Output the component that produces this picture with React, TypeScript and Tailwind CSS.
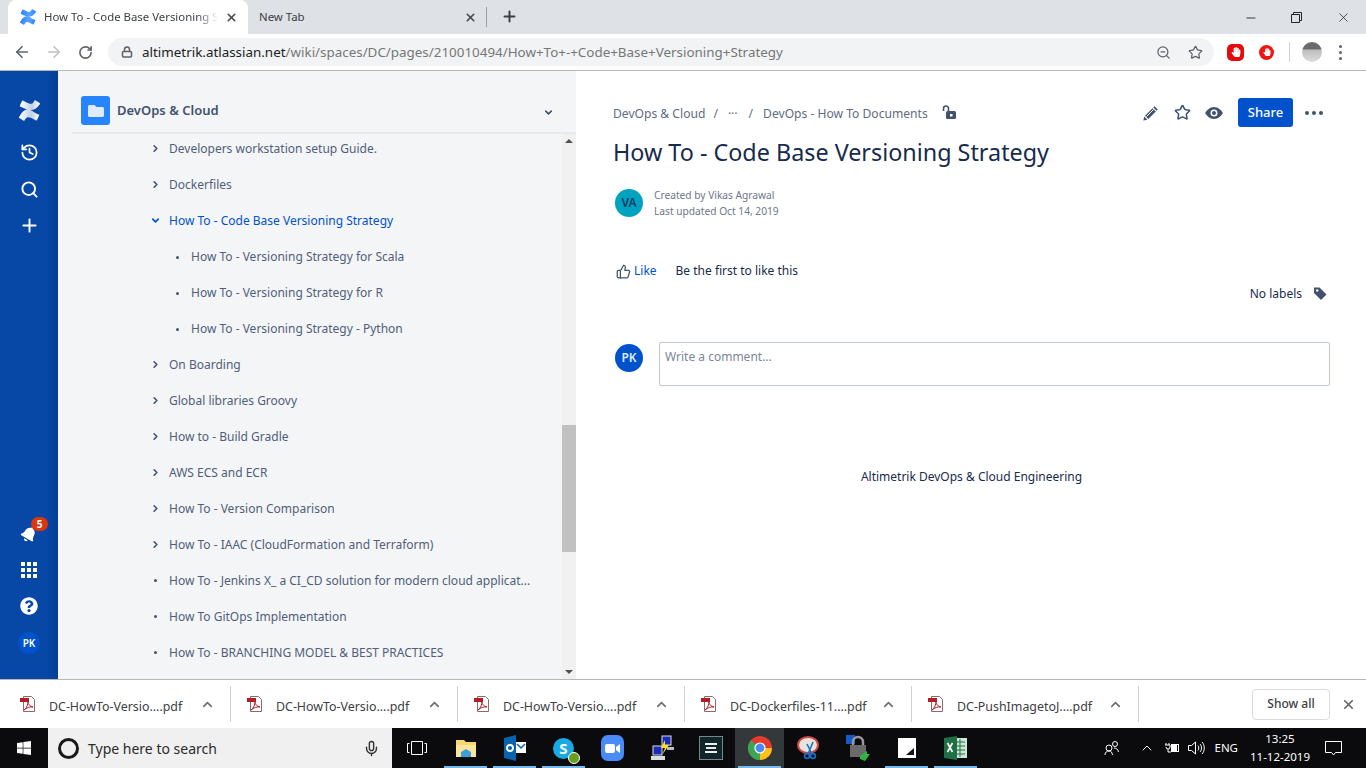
import {
  ArrowLeft,
  ArrowRight,
  ChevronDown,
  ChevronRight,
  ChevronUp,
  History,
  Lock,
  Mic,
  Minus,
  Plus,
  RotateCw,
  Search,
  Star,
  ThumbsUp,
  X,
  ZoomOut,
} from "lucide-react";
import { FaBell, FaQuestionCircle, FaWindows, FaHandPaper, FaFolder } from "react-icons/fa";

const tree = [
  { label: "Developers workstation setup Guide.", kind: "closed" },
  { label: "Dockerfiles", kind: "closed" },
  { label: "How To - Code Base Versioning Strategy", kind: "open" },
  { label: "How To - Versioning Strategy for Scala", kind: "child" },
  { label: "How To - Versioning Strategy for R", kind: "child" },
  { label: "How To - Versioning Strategy - Python", kind: "child" },
  { label: "On Boarding", kind: "closed" },
  { label: "Global libraries Groovy", kind: "closed" },
  { label: "How to - Build Gradle", kind: "closed" },
  { label: "AWS ECS and ECR", kind: "closed" },
  { label: "How To - Version Comparison", kind: "closed" },
  { label: "How To - IAAC (CloudFormation and Terraform)", kind: "closed" },
  { label: "How To - Jenkins X_ a CI_CD solution for modern cloud applicat...", kind: "leaf" },
  { label: "How To GitOps Implementation", kind: "leaf" },
  { label: "How To - BRANCHING MODEL & BEST PRACTICES", kind: "leaf" },
];

const downloads = [
  "DC-HowTo-Versio....pdf",
  "DC-HowTo-Versio....pdf",
  "DC-HowTo-Versio....pdf",
  "DC-Dockerfiles-11....pdf",
  "DC-PushImagetoJ....pdf",
];

function ConfluenceLogo({ size, color, id }: { size: number; color: string; id: string }) {
  return (
    <svg width={size} height={size} viewBox="0 0 24 24" className="shrink-0">
      <defs>
        <linearGradient id={id} x1="0" y1="0" x2="1" y2="0">
          <stop offset="0" stopColor={color} />
          <stop offset="0.6" stopColor={color} stopOpacity="0.75" />
          <stop offset="1" stopColor={color} />
        </linearGradient>
      </defs>
      <path
        fill={`url(#${id})`}
        d="M.87 18.26c-.25.38-.53.87-.76 1.24a.76.76 0 0 0 .25 1.04l4.97 3.05a.76.76 0 0 0 1.06-.26c.2-.33.45-.76.73-1.22 1.97-3.25 3.95-2.85 7.51-1.15l4.96 2.34a.76.76 0 0 0 1.03-.38l2.36-5.33a.76.76 0 0 0-.38-1c-1.1-.52-3.28-1.55-4.97-2.36C11.6 9.3 5.5 9.5.87 18.26z"
      />
      <path
        fill={`url(#${id})`}
        d="M23.13 5.74c.25-.4.53-.87.76-1.25a.76.76 0 0 0-.25-1.03L18.67.4a.76.76 0 0 0-1.06.26c-.2.34-.45.77-.73 1.23-1.97 3.25-3.95 2.85-7.51 1.15L4.44.7a.76.76 0 0 0-1.03.38L1.05 6.4a.76.76 0 0 0 .38 1c1.1.52 3.28 1.55 4.97 2.36 6.07 2.9 12.1 2.7 16.73-4.02z"
      />
    </svg>
  );
}

function PdfIcon() {
  return (
    <svg width="17" height="17" viewBox="0 0 17 17" className="shrink-0">
      <path d="M3.5 .5h8l3 3v12h-11z" fill="#fff" stroke="#8a6a6a" />
      <rect x="0" y="2" width="9" height="4" fill="#b51c24" />
      <path d="M4 14c3-2 4-6 4-9 0 4 2 5 5 6-3-.5-6 .5-9 3z" fill="none" stroke="#b51c24" />
    </svg>
  );
}

function TreeRow({ label, kind }: { label: string; kind: string }) {
  const isOpen = kind === "open";
  return (
    <div className="flex h-9 shrink-0 items-center text-[12px] text-[#505f79]">
      {kind === "child" ? (
        <>
          <span className="ml-[118px] h-[3px] w-[3px] rounded-full bg-[#42526e]" />
          <span className="ml-[12px] whitespace-nowrap">{label}</span>
        </>
      ) : (
        <>
          <span className="ml-[90px] flex w-[14px] shrink-0 -translate-y-px justify-center">
            {kind === "leaf" ? (
              <span className="h-[3px] w-[3px] rounded-full bg-[#42526e]" />
            ) : isOpen ? (
              <ChevronDown size={11} strokeWidth={3.5} className="text-[#0052cc]" />
            ) : (
              <ChevronRight size={11} strokeWidth={3.5} className="text-[#42526e]" />
            )}
          </span>
          <span className={`ml-[7px] whitespace-nowrap ${isOpen ? "text-[#0052cc]" : ""}`}>{label}</span>
        </>
      )}
    </div>
  );
}

function TaskIcon({ children, open, active }: { children: React.ReactNode; open?: boolean; active?: boolean }) {
  return (
    <div className={`relative flex h-10 w-[49px] items-center justify-center ${active ? "bg-[#33383b]" : ""}`}>
      {children}
      {open && <span className="absolute bottom-0 left-[3px] right-[3px] h-[2px] bg-[#76b9ed]" />}
    </div>
  );
}

export default function App() {
  return (
    <div className="flex h-[768px] w-[1366px] flex-col overflow-hidden bg-white font-['Noto_Sans',sans-serif]">
      {/* tabs */}
      <div className="flex h-[34px] shrink-0 items-end bg-[#dee1e6] pl-2 text-[11.4px] text-[#3c4043]">
        <div className="flex h-[34px] w-[240px] items-center rounded-t-lg bg-white pl-[12px] pr-2">
          <ConfluenceLogo size={16} color="#2684ff" id="favicon" />
          <span className="ml-2 w-[174px] overflow-hidden whitespace-nowrap [mask-image:linear-gradient(90deg,#000_88%,transparent)]">
            How To - Code Base Versioning Strategy
          </span>
          <X size={13} strokeWidth={3} className="ml-[7px] text-[#45494d]" />
        </div>
        <div className="flex h-[34px] w-[238px] items-center pl-[11px] pr-[9px]">
          <span className="flex-1">New Tab</span>
          <X size={13} strokeWidth={3} className="text-[#45494d]" />
        </div>
        <div className="mb-[7px] h-5 w-px bg-[#9aa0a6]" />
        <Plus size={17} strokeWidth={2.8} className="mb-[9px] ml-[14px] text-[#3c4043]" />
        <div className="mb-[9px] ml-auto flex items-center text-[#222]">
          <Minus size={14} strokeWidth={1.5} className="mr-[33px]" />
          <svg width="11" height="11" viewBox="0 0 11 11" className="mr-[34px]" fill="none" stroke="#222">
            <path d="M.5 2.500h8v8h-8zM2.500 2.500v-2h8v8h-2" />
          </svg>
          <X size={15} strokeWidth={1.2} className="mr-[15px]" />
        </div>
      </div>

      {/* toolbar */}
      <div className="flex h-[37px] shrink-0 items-center border-b border-[#b7b7b7] bg-white">
        <ArrowLeft size={18} strokeWidth={2.2} className="ml-[13px] text-[#5f6368]" />
        <ArrowRight size={18} strokeWidth={2.2} className="ml-[14px] text-[#bfc1c4]" />
        <RotateCw size={15} strokeWidth={2.6} className="ml-[15px] text-[#5f6368]" />
        <div className="ml-[15px] flex h-7 w-[1106px] items-center rounded-full bg-[#f1f3f4] pl-[13px] pr-[11px]">
          <Lock size={12} strokeWidth={3} className="text-[#5f6368]" />
          <span className="ml-[9px] flex-1 text-[13.4px] whitespace-nowrap text-[#777]">
            <span className="text-[#202124]">altimetrik.atlassian.net</span>/wiki/spaces/DC/pages/210010494/How+To+-+Code+Base+Versioning+Strategy
          </span>
          <ZoomOut size={15} className="text-[#5f6368]" />
          <Star size={15} strokeWidth={2} className="ml-[17px] text-[#5f6368]" />
        </div>
        <span className="ml-[13px] flex h-[17px] w-[17px] items-center justify-center rounded-[5px] bg-[#e30b0b]">
          <FaHandPaper size={10} className="text-white" />
        </span>
        <span className="ml-[15px] flex h-[15px] w-[15px] items-center justify-center rounded-full bg-[#f01515]">
          <FaHandPaper size={8} className="text-white" />
        </span>
        <span className="ml-[15px] h-5 w-px bg-[#cfcfcf]" />
        <span className="ml-[12px] h-5 w-5 rounded-full bg-[linear-gradient(#6a6a6a_0,#6a6a6a_35%,#bdbdbd_40%,#dcdcdc_100%)]" />
        <span className="ml-[17px] flex flex-col gap-[3px]">
          <span className="h-[3px] w-[3px] rounded-full bg-[#5f6368]" />
          <span className="h-[3px] w-[3px] rounded-full bg-[#5f6368]" />
          <span className="h-[3px] w-[3px] rounded-full bg-[#5f6368]" />
        </span>
      </div>

      {/* page */}
      <div className="flex min-h-0 flex-1">
        <div className="flex w-[58px] shrink-0 flex-col items-center bg-[linear-gradient(90deg,#0747a6_80%,#063f94)] text-white">
          <div className="mt-[29px]">
            <ConfluenceLogo size={21} color="#ffffff" id="navlogo" />
          </div>
          <History size={19} strokeWidth={2.2} className="mt-[22px]" />
          <Search size={19} strokeWidth={2.4} className="mt-[18px]" />
          <Plus size={21} strokeWidth={2.2} className="mt-[16px]" />
          <div className="relative mt-auto">
            <FaBell size={16} className="rotate-[30deg]" />
            <span className="absolute -right-[11px] -top-[9px] flex h-[14px] w-[17px] items-center justify-center rounded-full bg-[#de350b] text-[10px] font-bold">5</span>
          </div>
          <div className="mt-[20px] grid grid-cols-3 gap-[2px]">
            {Array.from({ length: 9 }).map((_, i) => (
              <span key={i} className="h-[4px] w-[4px] bg-white" />
            ))}
          </div>
          <FaQuestionCircle size={18} className="mt-[19px]" />
          <span className="mb-[25px] mt-[17px] flex h-[22px] w-[22px] items-center justify-center rounded-full bg-[#0052cc] text-[10px] font-semibold">PK</span>
        </div>

        <div className="flex w-[518px] shrink-0 flex-col bg-[#f4f5f7]">
          <div className="ml-[14px] flex h-[63px] shrink-0 items-end border-b-2 border-[#e8e9ed] pb-[7px]">
            <span className="ml-[9px] flex h-[29px] w-[29px] items-center justify-center rounded-[3px] bg-[#2684ff]">
              <FaFolder size={16} className="text-[#deebff]" />
            </span>
            <span className="mb-[5px] ml-[7px] text-[13px] font-semibold text-[#42526e]">DevOps &amp; Cloud</span>
            <ChevronDown size={11} strokeWidth={3.5} className="mb-[7px] ml-[324px] text-[#42526e]" />
          </div>
          <div className="flex min-h-0 flex-1">
            <div className="min-w-0 flex-1 overflow-hidden">
              <div className="-mt-[3px] flex flex-col">
                {tree.map((t) => (
                  <TreeRow key={t.label} label={t.label} kind={t.kind} />
                ))}
              </div>
            </div>
            <div className="flex w-[14px] shrink-0 flex-col bg-[#f1f1f1]">
              <span className="mx-auto mt-[5px] h-0 w-0 border-x-[4px] border-b-[4px] border-x-transparent border-b-[#505050]" />
              <span className="mt-[282px] h-[127px] w-full bg-[#c1c1c1]" />
              <span className="mx-auto mb-[5px] mt-auto h-0 w-0 border-x-[4px] border-t-[4px] border-x-transparent border-t-[#505050]" />
            </div>
          </div>
        </div>

        <div className="min-w-0 flex-1 pl-[37px] pr-[36px]">
          <div className="mt-[27px] flex h-[29px] items-center text-[12.1px] text-[#5e6c84]">
            <span className="mt-[4px]">DevOps &amp; Cloud</span>
            <span className="ml-2 mt-[4px]">/</span>
            <span className="ml-[10px] mt-[4px]">···</span>
            <span className="ml-[11px] mt-[4px]">/</span>
            <span className="ml-[10px] mt-[4px]">DevOps - How To Documents</span>
            <svg width="14" height="15" viewBox="0 0 14 15" className="-mt-[1px] ml-[14px]">
              <path d="M1.500 6V3.500a2.500 2.500 0 0 1 5 0V6" fill="none" stroke="#42526e" strokeWidth="1.600" />
              <rect x="4" y="6" width="10" height="8" rx="1.500" fill="#42526e" />
              <rect x="8" y="9" width="2.500" height="2.500" fill="#fff" />
            </svg>
            <div className="ml-auto flex items-center text-[#42526e]">
              <svg width="16" height="16" viewBox="0 0 16 16" fill="#42526e">
                <path d="M11.500 1.200l3.300 3.300-1.200 1.200-3.300-3.300zM9.500 3.200l3.300 3.300-7.500 7.500-3.300-3.300zM1.200 11.600l3.200 3.200-4 .800z" />
                <path d="M10.500 4.500L3.500 11.500" stroke="#fff" strokeWidth="1" />
              </svg>
              <Star size={17} strokeWidth={2.2} className="ml-[15px]" />
              <svg width="18" height="12" viewBox="0 0 18 12" className="ml-[14px]">
                <path d="M9 0c4 0 7 3 9 6-2 3-5 6-9 6S2 9 0 6c2-3 5-6 9-6z" fill="#42526e" />
                <circle cx="9" cy="6" r="3.500" fill="#fff" />
                <circle cx="9" cy="6" r="2" fill="#42526e" />
              </svg>
              <span className="ml-[15px] flex h-[29px] w-[55px] items-center justify-center rounded-[3px] bg-[#0052cc] text-[13px] font-medium text-white">Share</span>
              <span className="ml-[12px] mr-[7px] flex gap-[3px]">
                <span className="h-[4px] w-[4px] rounded-full bg-[#42526e]" />
                <span className="h-[4px] w-[4px] rounded-full bg-[#42526e]" />
                <span className="h-[4px] w-[4px] rounded-full bg-[#42526e]" />
              </span>
            </div>
          </div>
          <h1 className="mt-[9px] text-[23.35px] leading-8 text-[#172b4d]">How To - Code Base Versioning Strategy</h1>
          <div className="mt-[19px] flex items-center">
            <span className="ml-[2px] flex h-[28px] w-[28px] items-center justify-center rounded-full bg-[#00a3bf] text-[12px] font-semibold text-[#0d3d66]">VA</span>
            <div className="ml-[11px] text-[10.2px] leading-4 text-[#6b778c]">
              <div>Created by Vikas Agrawal</div>
              <div>Last updated Oct 14, 2019</div>
            </div>
          </div>
          <div className="mt-[42px] flex h-5 items-center text-[12px]">
            <ThumbsUp size={15} className="ml-[3px] text-[#42526e]" />
            <span className="ml-[3px] text-[#0052cc]">Like</span>
            <span className="ml-[19px] text-[#172b4d]">Be the first to like this</span>
          </div>
          <div className="mt-[3px] flex h-5 items-center justify-end text-[12px] text-[#172b4d]">
            <span>No labels</span>
            <svg width="14" height="14" viewBox="0 0 14 14" className="-mt-[3px] ml-[11px] mr-[3px]">
              <path d="M1 1.500h5.500L13.500 8.500 8 14 1 7z" fill="#42526e" />
              <circle cx="4.200" cy="4.500" r="1.200" fill="#fff" />
            </svg>
          </div>
          <div className="mt-[38px] flex items-start">
            <span className="ml-[2px] mt-[2px] flex h-[28px] w-[28px] items-center justify-center rounded-full bg-[#0052cc] text-[12px] font-semibold text-[#deebff]">PK</span>
            <div className="ml-4 h-[44px] flex-1 rounded-[2px] border border-[#c1c7d0] px-[5px] py-[5px] text-[12px] text-[#7a869a]">Write a comment...</div>
          </div>
          <div className="mt-[82px] text-center text-[12px] text-[#172b4d]">Altimetrik DevOps &amp; Cloud Engineering</div>
        </div>
      </div>

      {/* downloads */}
      <div className="flex h-[49px] shrink-0 items-center border-t border-[#b7b7b7] bg-white">
        {downloads.map((d, i) => (
          <div key={i} className="flex h-9 w-[227px] shrink-0 items-center border-r border-[#d0d0d0] pl-[16px] first:w-[231px] first:pl-[20px]">
            <PdfIcon />
            <span className="ml-[12px] mt-[6px] w-[151px] text-[12.4px] whitespace-nowrap text-[#3c4043]">{d}</span>
            <ChevronUp size={15} strokeWidth={2.6} className="text-[#6e6e6e]" />
          </div>
        ))}
        <span className="ml-auto flex h-[31px] w-[78px] items-center justify-center rounded-[4px] border border-[#dadce0] text-[12px] font-medium text-[#3c4043]">Show all</span>
        <X size={15} strokeWidth={2.6} className="ml-[11px] mr-[10px] text-[#5f6368]" />
      </div>

      {/* taskbar */}
      <div className="flex h-10 shrink-0 items-center bg-[#0b0b0d] text-white">
        <div className="flex w-[48px] justify-center">
          <FaWindows size={16} />
        </div>
        <div className="flex h-10 w-[344px] items-center bg-[#f0f0f0] text-[#2b2b2b]">
          <span className="ml-[10px] h-[21px] w-[21px] rounded-full border-[3px] border-[#1a1a1a]" />
          <span className="ml-[9px] flex-1 text-[14px]">Type here to search</span>
          <Mic size={17} className="mr-[12px] text-[#333]" />
        </div>
        <TaskIcon>
          <svg width="20" height="14" viewBox="0 0 20 14" fill="none" stroke="#fff">
            <path d="M4.500.5h11v13h-11zM2.500 2.500h-2v9h2M17.500 2.500h2v9h-2" />
          </svg>
        </TaskIcon>
        <TaskIcon open>
          <svg width="22" height="20" viewBox="0 0 22 20">
            <path d="M1 2h8l2 2h10v15H1z" fill="#f7d774" />
            <rect x="1" y="7" width="20" height="12" fill="#fbe59a" />
            <path d="M6 19v-5l5-3 5 3v5z" fill="#3aa0d8" />
          </svg>
        </TaskIcon>
        <TaskIcon open>
          <svg width="22" height="26" viewBox="0 0 22 26">
            <path d="M0 3l12-3v26L0 23z" fill="#0a64ad" />
            <rect x="12" y="7" width="10" height="11" fill="#fff" />
            <path d="M13 9l4 4 4-4" fill="none" stroke="#0a64ad" strokeWidth="1.5" />
            <circle cx="6" cy="13" r="3" fill="none" stroke="#fff" strokeWidth="1.8" />
          </svg>
        </TaskIcon>
        <TaskIcon open>
          <div className="relative">
            <span className="flex h-[21px] w-[21px] items-center justify-center rounded-full bg-[#19a9e5] text-[15px] font-bold text-white">S</span>
            <span className="absolute -bottom-[5px] -right-[6px] flex h-3 w-3 items-center justify-center rounded-full border border-white bg-[#6a9e1f]" />
          </div>
        </TaskIcon>
        <TaskIcon>
          <span className="flex h-[26px] w-[23px] items-center justify-center rounded-[7px] bg-[#4a8cf7]">
            <svg width="15" height="9" viewBox="0 0 15 9" fill="#fff">
              <rect width="10" height="9" rx="2" />
              <path d="M11 3l4-3v9l-4-3z" />
            </svg>
          </span>
        </TaskIcon>
        <TaskIcon>
          <svg width="24" height="26" viewBox="0 0 24 26">
            <rect x="12" y="1" width="9" height="9" fill="#1a2bb8" stroke="#ddd" />
            <rect x="3" y="11" width="9" height="9" fill="#1a2bb8" stroke="#ddd" />
            <rect x="1" y="21" width="14" height="4" fill="#ddd" />
            <path d="M15 5l-4 8h4l-3 7 7-10h-4z" fill="#f5e21c" />
            <rect x="17" y="12" width="7" height="3" fill="#bbb" />
          </svg>
        </TaskIcon>
        <TaskIcon>
          <div className="flex h-[24px] w-[24px] flex-col items-center justify-center gap-[2px] border border-[#6e8a8a] bg-[#12262a]">
            <span className="h-[2px] w-[12px] bg-[#e6eeee]" />
            <span className="h-[2px] w-[10px] bg-[#e6eeee]" />
            <span className="h-[2px] w-[12px] bg-[#e6eeee]" />
          </div>
        </TaskIcon>
        <TaskIcon open active>
          <svg width="24" height="24" viewBox="0 0 24 24">
            <circle cx="12" cy="12" r="12" fill="#e33b2e" />
            <path d="M12 12L1.600 18A12 12 0 0 0 12 24L18 12z" fill="#3aa757" />
            <path d="M1.600 18A12 12 0 0 1 3 4.500L12 12z" fill="#3aa757" />
            <path d="M12 12h12A12 12 0 0 1 12 24z" fill="#fbc116" />
            <circle cx="12" cy="12" r="5.600" fill="#fff" />
            <circle cx="12" cy="12" r="4.400" fill="#4a8af4" />
          </svg>
        </TaskIcon>
        <TaskIcon>
          <svg width="24" height="24" viewBox="0 0 24 24">
            <ellipse cx="11" cy="9" rx="10" ry="8" fill="#e8e3dc" stroke="#c44" strokeWidth="2" />
            <path d="M10 8l5 10M16 6l-5 12" stroke="#1673c9" strokeWidth="1.600" />
            <circle cx="10" cy="20" r="2.400" fill="none" stroke="#1673c9" strokeWidth="1.600" />
            <circle cx="16" cy="20" r="2.400" fill="none" stroke="#1673c9" strokeWidth="1.600" />
          </svg>
        </TaskIcon>
        <TaskIcon>
          <svg width="24" height="26" viewBox="0 0 24 26">
            <rect x="0" y="0" width="9" height="9" fill="#1659c7" />
            <path d="M7 11V7a5 5 0 0 1 10 0v4" fill="none" stroke="#999" strokeWidth="2.400" />
            <rect x="4" y="10" width="16" height="12" fill="#6a6a6a" />
            <path d="M14 21l7-5v3l3 0-5 7-5-2z" fill="#2fb544" />
          </svg>
        </TaskIcon>
        <TaskIcon open>
          <svg width="18" height="20" viewBox="0 0 18 20">
            <rect width="18" height="20" fill="#fff" />
            <path d="M8 17l8-7v7z" fill="#111" />
          </svg>
        </TaskIcon>
        <TaskIcon open>
          <svg width="23" height="24" viewBox="0 0 23 24">
            <rect x="9" y="2" width="14" height="20" fill="#cfe5d6" />
            <path d="M12 6h9M12 10h9M12 14h9M12 18h9M16 3v18" stroke="#1e7145" />
            <path d="M0 2l13-2v24L0 22z" fill="#1e7145" />
            <path d="M3.500 7l5 9M8.500 7l-5 9" stroke="#fff" strokeWidth="1.600" />
          </svg>
        </TaskIcon>

        <div className="ml-auto flex items-center text-[12px]">
          <svg width="16" height="16" viewBox="0 0 16 16" fill="none" stroke="#fff" className="mr-[19px]">
            <circle cx="5" cy="8" r="3" />
            <circle cx="11" cy="4" r="2.500" />
            <path d="M1 15c0-3 2-4 4-4s3 1 3.500 4M10 8c2 0 4 1 4.500 4" />
          </svg>
          <ChevronUp size={16} strokeWidth={1.4} className="mr-[9px]" />
          <svg width="16" height="12" viewBox="0 0 16 12" fill="none" stroke="#fff" className="mr-[8px]">
            <path d="M2 1v2M5 1v2M1 3h5v2a2 2 0 0 1-4 0M4 7v3h3" />
            <rect x="7.500" y="2.500" width="7" height="7" />
            <rect x="8.500" y="3.500" width="4" height="5" fill="#fff" />
          </svg>
          <svg width="17" height="14" viewBox="0 0 17 14" fill="none" stroke="#fff" className="mr-[9px]">
            <path d="M.5 4.500h3l4-3.500v12l-4-3.500h-3zM10 4.500c1 1.500 1 3.500 0 5M12 3c2 2 2 6 0 8M14 1c3 3 3 9 0 12" />
          </svg>
          <span className="mr-[12px] text-[11.5px]">ENG</span>
          <div className="mr-[15px] w-[60px] text-center text-[11.5px] leading-[18px] whitespace-nowrap">
            <div>13:25</div>
            <div>11-12-2019</div>
          </div>
          <svg width="17" height="17" viewBox="0 0 17 17" fill="none" stroke="#fff" className="mr-[24px]">
            <path d="M.5 1.500h16v11h-6l-2 2.500-2-2.500h-6z" />
          </svg>
        </div>
      </div>
    </div>
  );
}
